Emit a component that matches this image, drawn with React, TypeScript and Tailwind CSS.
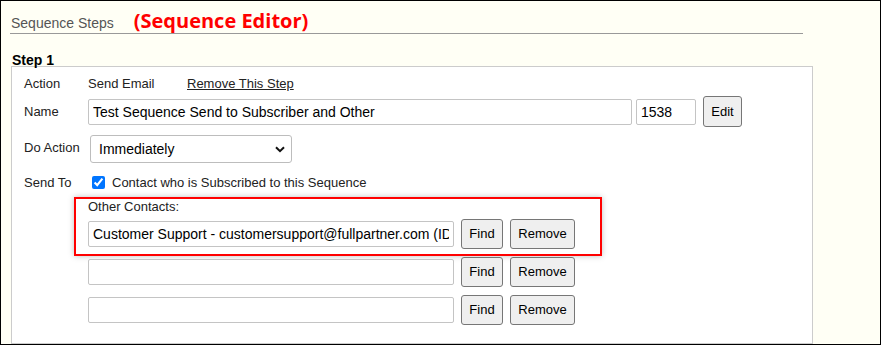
export default function App() {
  return (
    <div className="w-[882px] h-[346px] bg-white">
      <div className="w-[881px] h-[345px] border border-black bg-[#fffff5] overflow-hidden font-['Liberation_Sans',Arial,sans-serif] text-[#222]">
        <div className="ml-[9px] w-[793px] h-[33px] border-b border-[#999] flex items-baseline pt-[10px]">
          <span className="ml-[1px] text-[14px] leading-[16px] text-[#555]">Sequence Steps</span>
          <span className="ml-[20px] font-['Open_Sans',sans-serif] font-bold text-[20px] leading-[20px] text-[#ff0000]">
            (Sequence Editor)
          </span>
        </div>
        <div className="ml-[11px] mt-[18px] h-[14px] text-[14px] leading-[16px] font-bold text-black">Step 1</div>
        <div className="ml-[10px] w-[802px] h-[278px] border border-[#ccc] bg-white pl-[12px] text-[13px]">
          <div className="mt-[8px] h-[18px] flex items-center">
            <span className="w-[64px]">Action</span>
            <span className="w-[99px]">Send Email</span>
            <span className="underline">Remove This Step</span>
          </div>
          <div className="mt-[3px] h-[31px] flex items-center">
            <span className="w-[64px]">Name</span>
            <input
              defaultValue="Test Sequence Send to Subscriber and Other"
              className="w-[544px] h-[26px] border border-[#c4c4c4] rounded-[2px] px-[4px] text-[14px] text-black bg-white outline-none"
            />
            <input
              defaultValue="1538"
              className="ml-[4px] w-[60px] h-[26px] border border-[#c4c4c4] rounded-[2px] px-[4px] text-[14px] text-black bg-white outline-none"
            />
            <button className="ml-[7px] w-[39px] h-[31px] border border-[#767676] bg-[#efefef] rounded-[3px] text-[13px] text-black">
              Edit
            </button>
          </div>
          <div className="mt-[8px] h-[28px] flex items-center">
            <span className="w-[66px] mb-[3px]">Do Action</span>
            <div className="relative w-[202px] h-[28px]">
              <select
                defaultValue="Immediately"
                className="w-full h-full appearance-none border border-[#bdbdbd] rounded-[3px] pl-[8px] text-[14px] text-black bg-white outline-none"
              >
                <option>Immediately</option>
              </select>
              <svg
                className="absolute right-[7px] top-[11px] pointer-events-none"
                width="10"
                height="7"
                viewBox="0 0 10 7"
              >
                <path d="M1 1.2l4 4 4-4" fill="none" stroke="#111" strokeWidth="2" />
              </svg>
            </div>
          </div>
          <div className="mt-[10px] h-[19px] flex items-center">
            <span className="w-[68px]">Send To</span>
            <input type="checkbox" defaultChecked className="m-0 w-[13px] h-[13px] accent-[#0075ff]" />
            <span className="ml-[7px]">Contact who is Subscribed to this Sequence</span>
          </div>
          <div className="mt-[5px] ml-[50px] w-[528px] border-2 border-[#ff0000] shadow-[0_0_6px_rgba(0,0,0,0.25)] pl-[12px] pb-[5px]">
            <div className="text-[13px] leading-[15px]">Other Contacts:</div>
            <ContactRow className="mt-[5px]" value="Customer Support - customersupport@fullpartner.com (ID: 10482)" />
          </div>
          <div className="pl-[64px]">
            <ContactRow className="mt-[1px]" value="" />
            <ContactRow className="mt-[8px]" value="" />
          </div>
        </div>
      </div>
    </div>
  );
}

function ContactRow({ className, value }: { className: string; value: string }) {
  return (
    <div className={"h-[30px] flex items-center gap-[7px] " + className}>
      <input
        defaultValue={value}
        className="w-[366px] h-[26px] border border-[#c4c4c4] rounded-[2px] px-[4px] text-[14px] text-black bg-white outline-none"
      />
      <button className="w-[42px] h-[30px] border border-[#767676] bg-[#efefef] rounded-[3px] text-[13px] text-black">
        Find
      </button>
      <button className="w-[65px] h-[30px] border border-[#767676] bg-[#efefef] rounded-[3px] text-[13px] text-black">
        Remove
      </button>
    </div>
  );
}
